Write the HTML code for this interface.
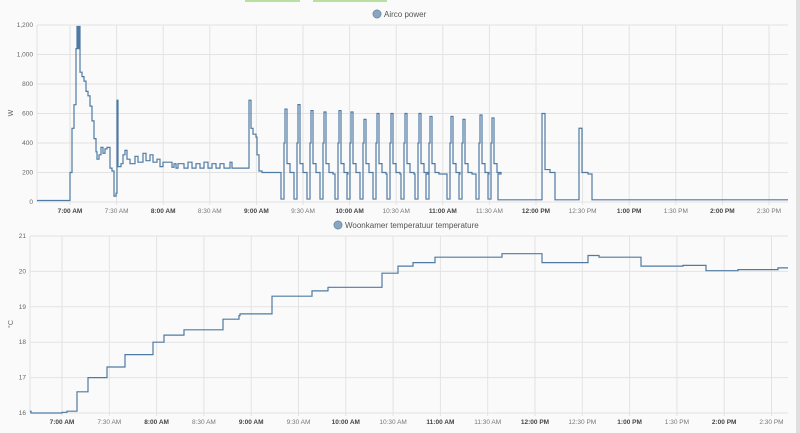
<!DOCTYPE html>
<html><head><meta charset="utf-8"><style>
html,body{margin:0;padding:0;background:#fafafa;width:800px;height:433px;overflow:hidden;font-family:"Liberation Sans",sans-serif}
svg{position:absolute;left:0;top:0}
</style></head><body>
<svg width="800" height="433" viewBox="0 0 800 433" xmlns="http://www.w3.org/2000/svg" font-family="Liberation Sans, sans-serif">
<rect x="0" y="0" width="800" height="433" fill="#fafafa"/>
<rect x="245" y="0" width="55" height="2" fill="#b8e0a0"/>
<rect x="313" y="0" width="74" height="2" fill="#b8e0a0"/>
<rect x="796" y="0" width="4" height="433" fill="#e0e0e0"/>
<!-- chart 1 -->
<circle cx="377" cy="14" r="4" fill="#8aa7c2" stroke="#6e8fae"/>
<text x="384" y="17" font-size="8" fill="#555">Airco power</text>
<g id="g1" stroke="#e3e3e3" stroke-width="1"></g>
<g id="t1" font-size="6.5" fill="#666"></g>
<text x="13" y="113" font-size="7" fill="#666" transform="rotate(-90 13 113)" text-anchor="middle">W</text>
<path id="p1" fill="none" stroke="#4f7aa3" stroke-width="1.2"/>
<!-- chart 2 -->
<circle cx="338" cy="225" r="4" fill="#8aa7c2" stroke="#6e8fae"/>
<text x="345" y="228" font-size="8" fill="#555">Woonkamer temperatuur temperature</text>
<g id="g2" stroke="#e3e3e3" stroke-width="1"></g>
<g id="t2" font-size="6.5" fill="#666"></g>
<text x="13" y="324" font-size="7" fill="#666" transform="rotate(-90 13 324)" text-anchor="middle">°C</text>
<path id="p2" fill="none" stroke="#4f7aa3" stroke-width="1.2"/>
</svg>
<script>
var NS="http://www.w3.org/2000/svg";
function el(p,t,a,txt){var e=document.createElementNS(NS,t);for(var k in a)e.setAttribute(k,a[k]);if(txt)e.textContent=txt;document.getElementById(p).appendChild(e);}
var labels=["7:00 AM","7:30 AM","8:00 AM","8:30 AM","9:00 AM","9:30 AM","10:00 AM","10:30 AM","11:00 AM","11:30 AM","12:00 PM","12:30 PM","1:00 PM","1:30 PM","2:00 PM","2:30 PM"];
// chart1
var L1=37,R1=788;
for(var i=0;i<=6;i++){var y=202-i*29.5;el("g1","line",{x1:L1,x2:R1,y1:y,y2:y});el("t1","text",{x:L1-4,y:y+2,"text-anchor":"end"},["0","200","400","600","800","1,000","1,200"][i]);}
el("g1","line",{x1:L1,x2:L1,y1:25,y2:202});
for(var i=0;i<16;i++){var x=70+i*46.6;el("g1","line",{x1:x,x2:x,y1:25,y2:205});el("t1","text",{x:x,y:213,"text-anchor":"middle","font-weight":i%2==0?"bold":"normal",fill:i%2==0?"#444":"#777"},labels[i]);}
// chart2
var L2=30,R2=788;
for(var i=0;i<=5;i++){var y=413-i*35.4;el("g2","line",{x1:L2,x2:R2,y1:y,y2:y});el("t2","text",{x:L2-4,y:y+2,"text-anchor":"end"},String(16+i));}
el("g2","line",{x1:L2,x2:L2,y1:236,y2:413});
for(var i=0;i<16;i++){var x=62+i*47.3;el("g2","line",{x1:x,x2:x,y1:236,y2:416});el("t2","text",{x:x,y:424,"text-anchor":"middle","font-weight":i%2==0?"bold":"normal",fill:i%2==0?"#444":"#777"},labels[i]);}
// power path
function py(v){return 202-v*0.1475;}
var pts=[[37,10],[70,200],[72,500],[74,660],[76,1040],[77,1190],[78,1040],[79,1190],[80,880],[82,850],[84,820],[86,750],[88,720],[90,650],[92,550],[94,430],[96,340],[97,290],[99,320],[101,370],[103,330],[105,360],[107,370],[110,230],[112,210],[114,40],[116,60],[117,690],[118,240],[121,260],[123,320],[125,350],[127,290],[130,260],[135,310],[138,270],[143,330],[146,280],[150,320],[153,270],[157,290],[160,240],[163,270],[172,235],[174,260],[176,230],[178,260],[184,230],[188,270],[192,230],[196,260],[200,230],[204,270],[208,230],[212,260],[216,230],[220,260],[224,230],[230,270],[232,230],[248,230],[249,690],[251,500],[253,460],[256,440],[257,320],[259,210],[262,200],[279,200]];
var d="M"+pts[0][0]+","+py(pts[0][1]);
for(var i=1;i<pts.length;i++){d+=" H"+pts[i][0]+" V"+py(pts[i][1]).toFixed(1);}
var spikes=[[285,630],[298,660],[311,620],[324,610],[339,620],[351,610],[364,560],[377,600],[391,600],[405,600],[419,600],[430,580],[451,580],[463,560],[480,590],[492,570]];
for(var i=0;i<spikes.length;i++){var s=spikes[i],x=s[0];d+=" H"+(x-4)+" V"+py(20)+" H"+(x-1)+" V"+py(400)+" H"+x+" V"+py(s[1])+" H"+(x+2)+" V"+py(260)+" H"+(x+5)+" V"+py(200)+" H"+(x+9)+" V"+py(190);}
d+=" H498 V"+py(15)+" H542 V"+py(600)+" H545 V"+py(220)+" H550 V"+py(200)+" H555 V"+py(15)+" H579 V"+py(500)+" H582 V"+py(200)+" H588 V"+py(190)+" H592 V"+py(15)+" H"+R1;
document.getElementById("p1").setAttribute("d",d);
// temp path
function ty(v){return 413-(v-16)*35.4;}
var tp=[[30,16.05],[31,16.0],[62,16.02],[67,16.05],[77,16.6],[88,17.0],[107,17.3],[125,17.65],[153,18.0],[164,18.2],[184,18.35],[223,18.65],[239,18.75],[240,18.8],[272,19.3],[312,19.45],[328,19.55],[382,19.95],[398,20.15],[413,20.25],[435,20.4],[502,20.5],[542,20.25],[588,20.45],[599,20.4],[641,20.15],[683,20.17],[706,20.02],[738,20.05],[778,20.1]];
var d2="M"+tp[0][0]+","+ty(tp[0][1]);
for(var i=1;i<tp.length;i++){d2+=" H"+tp[i][0]+" V"+ty(tp[i][1]).toFixed(1);}
d2+=" H"+R2;
document.getElementById("p2").setAttribute("d",d2);
</script>
</body></html>
